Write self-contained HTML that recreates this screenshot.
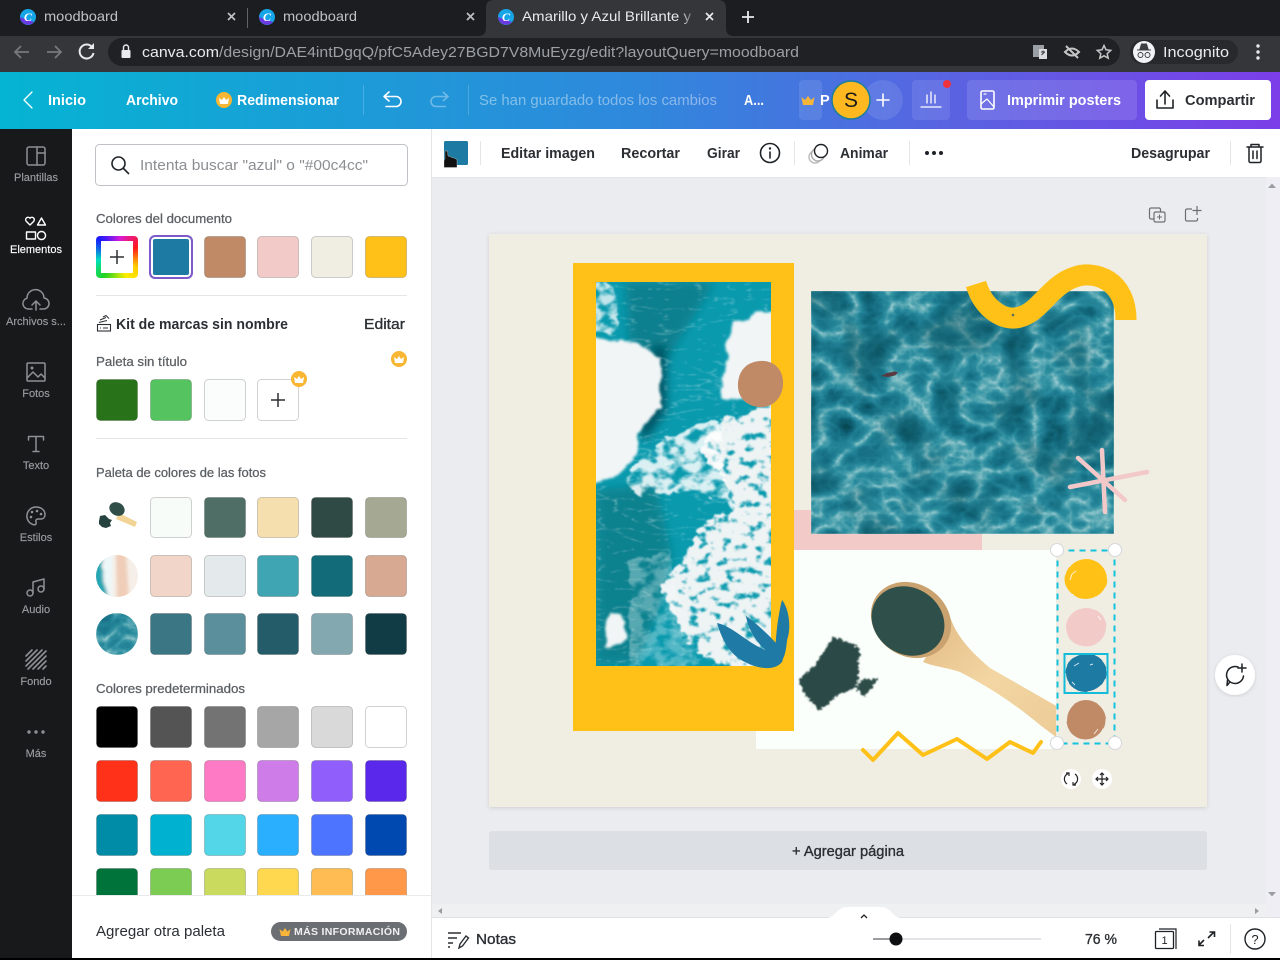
<!DOCTYPE html>
<html lang="es"><head><meta charset="utf-8"><title>Canva</title>
<style>
html,body{margin:0;padding:0;width:1280px;height:960px;overflow:hidden;background:#000}
svg{display:block;position:absolute;left:0;top:0}
text{font-family:"Liberation Sans",sans-serif}
.tab{font-size:14px;fill:#bdc1c6}
.hd{font-size:14.5px;font-weight:bold;fill:#fff}
.tb{font-size:14.5px;font-weight:bold;fill:#2b2f33}
.sb{font-size:11px;fill:#9a9ca0;text-anchor:middle;stroke:#9a9ca0;stroke-width:.15}
.sec{font-size:12.5px;fill:#5b5f63;stroke:#5b5f63;stroke-width:.25}
.s rect,rect.s{stroke:rgba(0,0,0,.18);stroke-width:1}
.ic{fill:none;stroke:#8e9094;stroke-width:1.5;stroke-linecap:round;stroke-linejoin:round}
.dk{fill:none;stroke:#1e2226;stroke-width:1.6;stroke-linecap:round;stroke-linejoin:round}
.wh{fill:none;stroke:#fff;stroke-width:1.6;stroke-linecap:round;stroke-linejoin:round}
#ring{position:absolute;left:96px;top:236px;width:42px;height:42px;border-radius:4px;background:conic-gradient(from 315deg,#1a1aff,#d81ad8 15%,#ff1a1a 30%,#ffcc00 45%,#ffee00 55%,#22d322 72%,#00e0c0 85%,#1a1aff)}
#ring i{position:absolute;left:5px;top:5px;width:32px;height:32px;background:#fff;display:block}
</style></head><body>
<svg width="1280" height="960" viewBox="0 0 1280 960" xmlns="http://www.w3.org/2000/svg">
<defs>
<linearGradient id="hdr" x1="0" x2="1" y1="0" y2="0"><stop offset="0" stop-color="#05b4d2"/><stop offset=".5" stop-color="#2f88dc"/><stop offset=".75" stop-color="#5a62e2"/><stop offset="1" stop-color="#7c3ee8"/></linearGradient>
<linearGradient id="fade" x1="0" x2="1" y1="0" y2="0"><stop offset="0" stop-color="#e8eaed"/><stop offset=".93" stop-color="#e8eaed"/><stop offset="1" stop-color="#77797c"/></linearGradient>
<linearGradient id="wood" x1="0" x2="1" y1="0" y2="1"><stop offset="0" stop-color="#e2bb84"/><stop offset=".5" stop-color="#f3d6a3"/><stop offset="1" stop-color="#eccb96"/></linearGradient>
<filter id="ocean" x="0" y="0" width="1" height="1" color-interpolation-filters="sRGB">
<feTurbulence type="turbulence" baseFrequency=".028 .036" numOctaves="5" seed="11"/>
<feColorMatrix values="1 0 0 0 0 1 0 0 0 0 1 0 0 0 0 0 0 0 0 1"/>
<feComponentTransfer><feFuncR type="table" tableValues=".7 .38 .18 .13 .09 .06 .04 .03"/><feFuncG type="table" tableValues=".84 .68 .56 .5 .44 .38 .32 .26"/><feFuncB type="table" tableValues=".86 .72 .63 .58 .52 .45 .38 .3"/></feComponentTransfer>
<feGaussianBlur stdDeviation=".5"/>
</filter>
<filter id="blot" x="0" y="0" width="1" height="1" color-interpolation-filters="sRGB">
<feTurbulence type="fractalNoise" baseFrequency=".016" numOctaves="3" seed="21"/>
<feColorMatrix values="0 0 0 0 .05 0 0 0 0 .32 0 0 0 0 .37 5 0 0 0 -2.400"/>
</filter>
<filter id="veins" x="0" y="0" width="1" height="1" color-interpolation-filters="sRGB">
<feTurbulence type="turbulence" baseFrequency=".03 .1" numOctaves="4" seed="5"/>
<feColorMatrix values="0 0 0 0 1 0 0 0 0 1 0 0 0 0 1 -6 0 0 0 1.050"/>
<feGaussianBlur stdDeviation=".5"/>
</filter>
<filter id="rough" x="-10%" y="-10%" width="120%" height="120%">
<feTurbulence type="fractalNoise" baseFrequency=".06" numOctaves="3" seed="3"/>
<feDisplacementMap in="SourceGraphic" scale="12" xChannelSelector="R" yChannelSelector="G"/>
<feGaussianBlur stdDeviation="1.300"/>
</filter>
<filter id="foam" x="-10%" y="-10%" width="120%" height="120%" color-interpolation-filters="sRGB">
<feTurbulence type="fractalNoise" baseFrequency=".07 .1" numOctaves="3" seed="9" result="n"/>
<feDisplacementMap in="SourceGraphic" in2="n" scale="14" xChannelSelector="R" yChannelSelector="G" result="d"/>
<feColorMatrix in="n" values="0 0 0 0 0 0 0 0 0 0 0 0 0 0 0 4 0 0 0 -1.300" result="m"/>
<feComposite in="d" in2="m" operator="in"/>
<feGaussianBlur stdDeviation=".8"/>
</filter>
<filter id="foam2" x="-10%" y="-10%" width="120%" height="120%" color-interpolation-filters="sRGB">
<feTurbulence type="fractalNoise" baseFrequency=".09 .12" numOctaves="3" seed="14" result="n"/>
<feDisplacementMap in="SourceGraphic" in2="n" scale="12" xChannelSelector="R" yChannelSelector="G" result="d"/>
<feColorMatrix in="n" values="0 0 0 0 0 0 0 0 0 0 0 0 0 0 0 6 0 0 0 -1.700" result="m"/>
<feComposite in="d" in2="m" operator="in"/>
<feGaussianBlur stdDeviation=".9"/>
</filter>
<filter id="soft" x="-20%" y="-20%" width="140%" height="140%"><feGaussianBlur stdDeviation="5"/></filter>
<filter id="soft2" x="-20%" y="-20%" width="140%" height="140%"><feGaussianBlur stdDeviation="1.500"/></filter>
<filter id="edge" x="-10%" y="-10%" width="120%" height="120%">
<feTurbulence type="fractalNoise" baseFrequency=".04" numOctaves="1" seed="8"/>
<feDisplacementMap in="SourceGraphic" scale="3" xChannelSelector="R" yChannelSelector="G"/>
</filter>
<filter id="powder" x="-20%" y="-20%" width="140%" height="140%">
<feTurbulence type="fractalNoise" baseFrequency=".3" numOctaves="3" seed="4"/>
<feDisplacementMap in="SourceGraphic" scale="7" xChannelSelector="R" yChannelSelector="G"/>
<feGaussianBlur stdDeviation=".7"/>
</filter>
<filter id="shadow" x="-5%" y="-5%" width="110%" height="110%"><feDropShadow dx="0" dy="1" stdDeviation="2" flood-color="#000" flood-opacity=".12"/></filter>
<clipPath id="p1"><rect x="596" y="282" width="175" height="384"/></clipPath>
<clipPath id="p2"><rect x="811" y="291" width="303" height="243"/></clipPath>
<clipPath id="p3"><rect x="756" y="550" width="300" height="199"/></clipPath>
<clipPath id="pn"><rect x="72" y="129" width="359" height="767"/></clipPath>
<clipPath id="c3"><circle cx="117" cy="634" r="21"/></clipPath>
<clipPath id="c2"><circle cx="117" cy="576" r="21"/></clipPath>
</defs>

<!-- browser chrome -->
<rect width="1280" height="36" fill="#1c1d20"/>
<rect y="36" width="1280" height="36" fill="#35363a"/>
<path d="M478 36q8 0 8-8V8q0-8 8-8h224q8 0 8 8v20q0 8 8 8z" fill="#35363a"/>
<line x1="247.500" y1="8" x2="247.500" y2="28" stroke="#5f6368"/>
<g>
<circle cx="28" cy="17" r="8" fill="#16a6e8"/><path d="M20 17a8 8 0 0 0 14 5z" fill="#6a3ae0"/><text x="28" y="21" font-size="12" font-style="italic" font-weight="bold" fill="#fff" text-anchor="middle" style="font-family:'Liberation Serif',serif">C</text>
<circle cx="267" cy="17" r="8" fill="#16a6e8"/><path d="M259 17a8 8 0 0 0 14 5z" fill="#6a3ae0"/><text x="267" y="21" font-size="12" font-style="italic" font-weight="bold" fill="#fff" text-anchor="middle" style="font-family:'Liberation Serif',serif">C</text>
<circle cx="506" cy="17" r="8" fill="#16a6e8"/><path d="M498 17a8 8 0 0 0 14 5z" fill="#6a3ae0"/><text x="506" y="21" font-size="12" font-style="italic" font-weight="bold" fill="#fff" text-anchor="middle" style="font-family:'Liberation Serif',serif">C</text>
</g>
<text class="tab" x="44" y="21" textLength="74" lengthAdjust="spacingAndGlyphs">moodboard</text>
<text class="tab" x="283" y="21" textLength="74" lengthAdjust="spacingAndGlyphs">moodboard</text>
<text class="tab" x="522" y="21" textLength="169" lengthAdjust="spacingAndGlyphs" style="fill:url(#fade)">Amarillo y Azul Brillante y</text>
<path d="M228 13l7 7m0-7l-7 7M467 13l7 7m0-7l-7 7" stroke="#bdc1c6" stroke-width="1.700"/>
<path d="M706 13l7 7m0-7l-7 7" stroke="#e8eaed" stroke-width="1.700"/>
<path d="M748 11v12M742 17h12" stroke="#e8eaed" stroke-width="1.800"/>
<path d="M29 52H15m6-6l-6 6 6 6M47 52h14m-6-6l6 6-6 6" fill="none" stroke="#75787c" stroke-width="1.800"/>
<path d="M92 47a7 7 0 1 0 1.500 6" fill="none" stroke="#e8eaed" stroke-width="2"/><path d="M94 43v6h-6z" fill="#e8eaed"/>
<rect x="108" y="38" width="1012" height="28" rx="14" fill="#202124"/>
<rect x="121.500" y="50" width="9" height="8" rx="1" fill="#e8eaed"/><path d="M123.500 50v-2.500a2.500 2.500 0 0 1 5 0V50" fill="none" stroke="#e8eaed" stroke-width="1.400"/>
<text x="142" y="57" font-size="15" fill="#e8eaed" textLength="77" lengthAdjust="spacingAndGlyphs">canva.com</text>
<text x="219" y="57" font-size="15" fill="#9aa0a6" textLength="580" lengthAdjust="spacingAndGlyphs">/design/DAE4intDgqQ/pfC5Adey27BGD7V8MuEyzg/edit?layoutQuery=moodboard</text>
<rect x="1033" y="45" width="11" height="12" fill="#9aa0a6"/><rect x="1039" y="49" width="8" height="10" fill="#dadce0"/><path d="M1041 52h4m-2-1.500v1.500m-1.500 3l3-3" stroke="#35363a" fill="none"/>
<path d="M1065 52q7-7 14 0q-7 7-14 0z" fill="none" stroke="#c4c7c5" stroke-width="2"/><path d="M1066 46l12 12" stroke="#c4c7c5" stroke-width="2"/>
<path d="M1104 45.500l2 4.300 4.700.6-3.500 3.200 1 4.600-4.200-2.400-4.200 2.400 1-4.600-3.500-3.200 4.700-.6z" fill="none" stroke="#c4c7c5" stroke-width="1.500"/>
<rect x="1130" y="40" width="108" height="24" rx="12" fill="#28292c"/>
<circle cx="1144" cy="52" r="11" fill="#f1f3f4"/><path d="M1137 50h14M1140 49l1.500-5h5l1.500 5z" fill="#3c4043" stroke="#3c4043"/><circle cx="1140.500" cy="55" r="2.500" fill="none" stroke="#3c4043"/><circle cx="1147.500" cy="55" r="2.500" fill="none" stroke="#3c4043"/>
<text x="1163" y="57" font-size="14.500" fill="#e8eaed" textLength="66" lengthAdjust="spacingAndGlyphs">Incognito</text>
<circle cx="1258" cy="46" r="1.700" fill="#e8eaed"/><circle cx="1258" cy="52" r="1.700" fill="#e8eaed"/><circle cx="1258" cy="58" r="1.700" fill="#e8eaed"/>

<!-- canva header -->
<rect y="72" width="1280" height="57" fill="url(#hdr)"/>
<path d="M32 92l-8 8 8 8" class="wh" style="stroke-width:1.300"/>
<text class="hd" x="48" y="105" textLength="38" lengthAdjust="spacingAndGlyphs">Inicio</text>
<text class="hd" x="126" y="105" textLength="52" lengthAdjust="spacingAndGlyphs">Archivo</text>
<circle cx="224" cy="100" r="8" fill="#f8b632"/><path d="M220 104l-1-6 3 2 2-3 2 3 3-2-1 6z" fill="#fff"/>
<text class="hd" x="237" y="105" textLength="102" lengthAdjust="spacingAndGlyphs">Redimensionar</text>
<line x1="363.500" y1="85" x2="363.500" y2="115" stroke="#fff" stroke-opacity=".18"/>
<line x1="468.500" y1="85" x2="468.500" y2="115" stroke="#fff" stroke-opacity=".18"/>
<path d="M389 92l-5 4.500 5 4.500M384 96.500h12a5 5 0 0 1 0 10h-10" class="wh"/>
<path d="M443 92l5 4.500-5 4.500M448 96.500h-12a5 5 0 0 0 0 10h10" fill="none" stroke="#fff" stroke-opacity=".35" stroke-width="1.600"/>
<text x="479" y="105" font-size="14.500" fill="#fff" fill-opacity=".42" textLength="238" lengthAdjust="spacingAndGlyphs">Se han guardado todos los cambios</text>
<text class="hd" x="744" y="105" textLength="20" lengthAdjust="spacingAndGlyphs">A...</text>
<rect x="799" y="80" width="23" height="40" rx="4" fill="#fff" fill-opacity=".1"/>
<path d="M803 105l-1.500-8 3.500 3 3-4 3 4 3.500-3-1.500 8z" fill="#f7b53a"/>
<text class="hd" x="820" y="105">P</text>
<circle cx="883" cy="100" r="20" fill="#fff" fill-opacity=".1"/>
<circle cx="851" cy="100" r="19" fill="#ffb81f" stroke="#1c7f9a" stroke-width="1.500"/>
<text x="851" y="107" font-size="21" fill="#1b1b1b" text-anchor="middle">S</text>
<path d="M883 94v12M877 100h12" class="wh"/>
<rect x="912" y="80" width="38" height="40" rx="4" fill="#fff" fill-opacity=".1"/>
<path d="M921 107h20M927 103v-8M931 103V92M935 103v-8" class="wh" style="stroke-width:1.300"/>
<circle cx="947" cy="84" r="4" fill="#f0323c"/>
<rect x="967" y="80" width="170" height="40" rx="4" fill="#fff" fill-opacity=".12"/>
<rect x="981" y="91" width="13" height="18" rx="1.500" class="wh"/><path d="M981 104l6-5 7 8M984 94h2" class="wh" style="stroke-width:1.200"/>
<text class="hd" x="1007" y="105" textLength="114" lengthAdjust="spacingAndGlyphs">Imprimir posters</text>
<rect x="1145" y="80" width="126" height="40" rx="4" fill="#fff"/>
<path d="M1165 104V92m-4.500 4l4.500-5 4.500 5M1157 100v8h16v-8" class="dk"/>
<text class="tb" x="1185" y="105" textLength="70" lengthAdjust="spacingAndGlyphs">Compartir</text>

<!-- sidebar -->
<rect y="129" width="72" height="831" fill="#18191b"/>
<rect x="27" y="147" width="18" height="18" rx="2" class="ic"/><path d="M37 147v18M37 153h8" class="ic"/>
<text class="sb" x="36" y="181">Plantillas</text>
<path d="M30 225l-3.800-3.800a2.400 2.400 0 0 1 3.800-3 2.400 2.400 0 0 1 3.800 3zM41.500 218l4 7h-8zM26.500 232h9v7h-9zM41.500 231.500a4 4 0 1 0 .01 0z" class="wh" style="stroke-width:1.400"/>
<text x="36" y="253" font-size="11" fill="#fff" text-anchor="middle" stroke="#fff" stroke-width=".15">Elementos</text>
<path d="M32 309h-4a5.500 5.500 0 0 1-1-10.800 8.500 8.500 0 0 1 17-.2 5.500 5.500 0 0 1-1 11h-3M36 310v-9m-4 4l4-4 4 4" class="ic"/>
<text class="sb" x="36" y="325">Archivos s...</text>
<rect x="27" y="363" width="18" height="18" rx="1" class="ic"/><path d="M27 378l6-6 5 5 3-3 4 4" class="ic"/><circle cx="32" cy="368" r="1.500" fill="#8e9094"/>
<text class="sb" x="36" y="397">Fotos</text>
<path d="M28.500 440v-3.500h15v3.500M36 436.500v15M33 451.500h6" class="ic"/>
<text class="sb" x="36" y="469">Texto</text>
<path d="M36 507a9 9 0 0 0-2 17.800c2 .2 2.500-1.300 2-2.800-.6-1.700.3-3 2-3h3c3 0 4-2.500 4-4.500 0-4.500-4-7.500-9-7.500z" class="ic"/><circle cx="32" cy="512" r="1.300" fill="#8e9094"/><circle cx="37" cy="511" r="1.300" fill="#8e9094"/><circle cx="41" cy="514" r="1.300" fill="#8e9094"/><circle cx="31" cy="517" r="1.300" fill="#8e9094"/>
<text class="sb" x="36" y="541">Estilos</text>
<path d="M33 593v-11l11-3v10" class="ic"/><circle cx="30" cy="593" r="3" class="ic"/><circle cx="41" cy="589" r="3" class="ic"/>
<text class="sb" x="36" y="613">Audio</text>
<path d="M26 656l6-6M26 661l11-11M26 666l16-16M28 669l18-18M33 669l13-13M38 669l8-8M43 669l3-3" class="ic" style="stroke-width:1.600"/>
<text class="sb" x="36" y="685">Fondo</text>
<circle cx="29" cy="732" r="1.700" fill="#8e9094"/><circle cx="36" cy="732" r="1.700" fill="#8e9094"/><circle cx="43" cy="732" r="1.700" fill="#8e9094"/>
<text class="sb" x="36" y="757">Más</text>

<!-- panel -->
<rect x="72" y="129" width="360" height="831" fill="#fff"/>
<line x1="431.500" y1="129" x2="431.500" y2="958" stroke="#e3e5e8"/>
<rect x="95.500" y="144.500" width="312" height="41" rx="4" fill="#fff" stroke="#bfc2c6"/>
<circle cx="118.500" cy="163.500" r="6.500" class="dk"/><path d="M123.500 168.500l5 5" class="dk"/>
<text x="140" y="170" font-size="14.500" fill="#8b8e92" textLength="228" lengthAdjust="spacingAndGlyphs">Intenta buscar "azul" o "#00c4cc"</text>
<text class="sec" x="96" y="223" textLength="136" lengthAdjust="spacingAndGlyphs">Colores del documento</text>
<g class="s">
<rect x="150.500" y="236.500" width="41" height="41" rx="4" fill="#1c7aa3" style="stroke:none"/>
<rect x="204.500" y="236.500" width="41" height="41" rx="4" fill="#c08a66"/>
<rect x="257.500" y="236.500" width="41" height="41" rx="4" fill="#f2cbc8"/>
<rect x="311.500" y="236.500" width="41" height="41" rx="4" fill="#f0ede3"/>
<rect x="365.500" y="236.500" width="41" height="41" rx="4" fill="#ffc118"/>
</g>
<rect x="152" y="238" width="38" height="38" rx="3" fill="none" stroke="#fff" stroke-width="2"/>
<rect x="150" y="236" width="42" height="42" rx="5" fill="none" stroke="#7d5cc9" stroke-width="2"/>
<line x1="96" y1="295.500" x2="407" y2="295.500" stroke="#e3e5e8"/>
<rect x="97.500" y="324.500" width="13" height="6.500" fill="none" stroke="#2b2f33" stroke-width="1.100"/><path d="M99 322.500l8-2M100 320l6-2.500M103 317l3-1.500 3 3M100 328h1M103 328h5" fill="none" stroke="#2b2f33" stroke-width="1"/>
<text class="tb" x="116" y="329" textLength="172" lengthAdjust="spacingAndGlyphs">Kit de marcas sin nombre</text>
<text x="364" y="329" font-size="14.500" fill="#2b2f33" stroke="#2b2f33" stroke-width=".3" textLength="41" lengthAdjust="spacingAndGlyphs">Editar</text>
<text class="sec" x="96" y="366" textLength="91" lengthAdjust="spacingAndGlyphs">Paleta sin título</text>
<circle cx="399" cy="359" r="8" fill="#f8b632"/><path d="M395 363l-1-6 3 2 2-3 2 3 3-2-1 6z" fill="#fff"/>
<g class="s">
<rect x="96.500" y="379.500" width="41" height="41" rx="4" fill="#287319"/>
<rect x="150.500" y="379.500" width="41" height="41" rx="4" fill="#55c35f"/>
<rect x="204.500" y="379.500" width="41" height="41" rx="4" fill="#fbfdfd"/>
<rect x="257.500" y="379.500" width="41" height="41" rx="4" fill="#fff"/>
</g>
<path d="M278 393v14M271 400h14" stroke="#2b2f33" stroke-width="1.500"/>
<circle cx="299" cy="379" r="8" fill="#f8b632"/><path d="M295 383l-1-6 3 2 2-3 2 3 3-2-1 6z" fill="#fff"/>
<line x1="96" y1="438.500" x2="407" y2="438.500" stroke="#e3e5e8"/>
<text class="sec" x="96" y="477" textLength="170" lengthAdjust="spacingAndGlyphs">Paleta de colores de las fotos</text>
<g class="s">
<rect x="150.500" y="497.500" width="41" height="40" rx="4" fill="#f8fcf9"/><rect x="204.500" y="497.500" width="41" height="40" rx="4" fill="#4f6e65"/><rect x="257.500" y="497.500" width="41" height="40" rx="4" fill="#f5dfae"/><rect x="311.500" y="497.500" width="41" height="40" rx="4" fill="#2f4a44"/><rect x="365.500" y="497.500" width="41" height="40" rx="4" fill="#a5a893"/>
<rect x="150.500" y="555.500" width="41" height="41" rx="4" fill="#f1d5c8"/><rect x="204.500" y="555.500" width="41" height="41" rx="4" fill="#e4eaec"/><rect x="257.500" y="555.500" width="41" height="41" rx="4" fill="#3fa5b3"/><rect x="311.500" y="555.500" width="41" height="41" rx="4" fill="#116b78"/><rect x="365.500" y="555.500" width="41" height="41" rx="4" fill="#d7a992"/>
<rect x="150.500" y="613.500" width="41" height="41" rx="4" fill="#3a7683"/><rect x="204.500" y="613.500" width="41" height="41" rx="4" fill="#5b8f9c"/><rect x="257.500" y="613.500" width="41" height="41" rx="4" fill="#255c69"/><rect x="311.500" y="613.500" width="41" height="41" rx="4" fill="#84a8b0"/><rect x="365.500" y="613.500" width="41" height="41" rx="4" fill="#113c45"/>
</g>
<!-- thumbs -->
<path d="M119 513l18 9-2 5-19-8z" fill="#f2d596"/><ellipse cx="117" cy="509" rx="8" ry="6.500" transform="rotate(30 117 509)" fill="#314e49"/><path d="M100 516l5-1 4 4 3 1-2 3 1 3-5 2-4-1-3-3 0-3z" fill="#27433f"/>
<g clip-path="url(#c2)"><rect x="96" y="555" width="42" height="42" fill="#f6efe9"/><g filter="url(#soft2)"><path d="M92 555h12l-3 12 4 6-2 8 8 20H92z" fill="#27a5b2"/><path d="M104 555h9l-1 42h-4l-5-20z" fill="#eef7f8"/><path d="M116 552h10l3 48h-12z" fill="#efcdb8"/></g></g>
<g clip-path="url(#c3)"><rect x="96" y="613" width="42" height="42" filter="url(#ocean)"/></g>
<text class="sec" x="96" y="693" textLength="149" lengthAdjust="spacingAndGlyphs">Colores predeterminados</text>
<g class="s" clip-path="url(#pn)">
<rect x="96.500" y="706.500" width="41" height="41" rx="4" fill="#000"/><rect x="150.500" y="706.500" width="41" height="41" rx="4" fill="#545454"/><rect x="204.500" y="706.500" width="41" height="41" rx="4" fill="#737373"/><rect x="257.500" y="706.500" width="41" height="41" rx="4" fill="#a6a6a6"/><rect x="311.500" y="706.500" width="41" height="41" rx="4" fill="#d9d9d9"/><rect x="365.500" y="706.500" width="41" height="41" rx="4" fill="#fff"/>
<rect x="96.500" y="760.500" width="41" height="41" rx="4" fill="#ff3118"/><rect x="150.500" y="760.500" width="41" height="41" rx="4" fill="#ff6550"/><rect x="204.500" y="760.500" width="41" height="41" rx="4" fill="#ff7ac5"/><rect x="257.500" y="760.500" width="41" height="41" rx="4" fill="#cd7ce8"/><rect x="311.500" y="760.500" width="41" height="41" rx="4" fill="#8f5efb"/><rect x="365.500" y="760.500" width="41" height="41" rx="4" fill="#5a28ea"/>
<rect x="96.500" y="814.500" width="41" height="41" rx="4" fill="#008ca6"/><rect x="150.500" y="814.500" width="41" height="41" rx="4" fill="#00b2d0"/><rect x="204.500" y="814.500" width="41" height="41" rx="4" fill="#52d6e8"/><rect x="257.500" y="814.500" width="41" height="41" rx="4" fill="#2aaefe"/><rect x="311.500" y="814.500" width="41" height="41" rx="4" fill="#4d74fe"/><rect x="365.500" y="814.500" width="41" height="41" rx="4" fill="#0049b0"/>
<rect x="96.500" y="868.500" width="41" height="41" rx="4" fill="#00733a"/><rect x="150.500" y="868.500" width="41" height="41" rx="4" fill="#7ccb52"/><rect x="204.500" y="868.500" width="41" height="41" rx="4" fill="#c9da5f"/><rect x="257.500" y="868.500" width="41" height="41" rx="4" fill="#ffd84f"/><rect x="311.500" y="868.500" width="41" height="41" rx="4" fill="#ffbc52"/><rect x="365.500" y="868.500" width="41" height="41" rx="4" fill="#ff9848"/>
</g>
<line x1="72" y1="895.500" x2="431" y2="895.500" stroke="#e9eaec"/>
<text x="96" y="936" font-size="14.500" fill="#2b2f33" textLength="129" lengthAdjust="spacingAndGlyphs">Agregar otra paleta</text>
<rect x="271" y="922" width="136" height="19" rx="9.500" fill="#6b6e73"/>
<path d="M281 936l-1.500-7 3 2.500 2.500-3.500 2.500 3.500 3-2.500-1.500 7z" fill="#f7b53a"/>
<text x="294" y="935" font-size="10.500" font-weight="bold" fill="#f0f0f0" textLength="106" lengthAdjust="spacing">MÁS INFORMACIÓN</text>

<!-- workspace -->
<rect x="432" y="177" width="848" height="741" fill="#ebecf0"/>
<rect x="432" y="129" width="848" height="48" fill="#fff"/>
<line x1="432" y1="177.500" x2="1280" y2="177.500" stroke="#e3e5e8"/>
<rect x="444" y="141" width="24" height="24" rx="1.500" fill="#1c7aa3"/>
<path d="M445 151h2.500l.5 5 2 .5 2 1 2 .5 3 1.500v8h-13v-7l1-1.500z" fill="#111" stroke="#fff" stroke-width=".3"/>
<line x1="480.500" y1="141" x2="480.500" y2="165" stroke="#e3e5e8"/>
<text class="tb" x="501" y="158" textLength="94" lengthAdjust="spacingAndGlyphs">Editar imagen</text>
<text class="tb" x="621" y="158" textLength="59" lengthAdjust="spacingAndGlyphs">Recortar</text>
<text class="tb" x="707" y="158" textLength="33" lengthAdjust="spacingAndGlyphs">Girar</text>
<circle cx="770" cy="153" r="9.500" class="dk"/><path d="M770 152v6" class="dk"/><circle cx="770" cy="148.500" r="1.200" fill="#1e2226"/>
<line x1="794.500" y1="141" x2="794.500" y2="165" stroke="#e3e5e8"/>
<circle cx="815" cy="157" r="6" fill="none" stroke="#bbb" stroke-width="1.400"/><circle cx="818" cy="154.500" r="6.500" fill="#fff" stroke="#aaa" stroke-width="1.400"/><circle cx="821" cy="151" r="6.500" fill="#fff" stroke="#1e2226" stroke-width="1.400"/>
<text class="tb" x="840" y="158" textLength="48" lengthAdjust="spacingAndGlyphs">Animar</text>
<line x1="909.500" y1="141" x2="909.500" y2="165" stroke="#e3e5e8"/>
<circle cx="927" cy="153" r="2" fill="#1e2226"/><circle cx="934" cy="153" r="2" fill="#1e2226"/><circle cx="941" cy="153" r="2" fill="#1e2226"/>
<text class="tb" x="1131" y="158" textLength="79" lengthAdjust="spacingAndGlyphs">Desagrupar</text>
<line x1="1230.500" y1="141" x2="1230.500" y2="165" stroke="#e3e5e8"/>
<path d="M1247 147h16M1251 147v-2.500h8v2.500M1249 147v14a1.500 1.500 0 0 0 1.500 1.500h9a1.500 1.500 0 0 0 1.500-1.500v-14M1253 151v7.500M1257 151v7.500" class="dk" style="stroke-width:1.500"/>
<!-- page tools -->
<path d="M1154 219h-3a1.500 1.500 0 0 1-1.500-1.500v-8a1.500 1.500 0 0 1 1.500-1.500h8a1.500 1.500 0 0 1 1.500 1.500v3" fill="none" stroke="#6b6f73" stroke-width="1.200"/><rect x="1154" y="212" width="11" height="10" rx="1.500" fill="none" stroke="#6b6f73" stroke-width="1.200"/><path d="M1159.500 214.500v5M1157 217h5" stroke="#6b6f73"/>
<path d="M1192 209h-5a1.500 1.500 0 0 0-1.500 1.500v9a1.500 1.500 0 0 0 1.500 1.500h9a1.500 1.500 0 0 0 1.500-1.500V218M1197 206v9M1192.500 210.500h9" fill="none" stroke="#6b6f73" stroke-width="1.200"/>
<!-- scrollbars -->
<rect x="1266" y="177" width="14" height="741" fill="#eeeef4"/>
<path d="M1268 188l4-4.500 4 4.500zM1268 892l4 4.500 4-4.500z" fill="#9a9ca0"/>
<rect x="432" y="904" width="834" height="14" fill="#eff0f2"/>
<path d="M442 908v6l-4-3zM1255 908v6l4-3z" fill="#9a9ca0"/>

<!-- page -->
<rect x="489" y="234" width="718" height="573" fill="#f0ede3" filter="url(#shadow)"/>
<rect x="794" y="510" width="188" height="40" fill="#f2cbc8"/>
<!-- white photo -->
<rect x="756" y="550" width="300" height="199" fill="#fbfffb"/>
<g clip-path="url(#p3)">
<path d="M950 617C958 640 975 655 990 668L1060 708V740L1040 725C1010 700 985 685 960 672C945 667 935 667 923 662Z" fill="url(#wood)"/>
<ellipse cx="911" cy="620" rx="42" ry="36" transform="rotate(35 911 620)" fill="#c9a26f"/>
<ellipse cx="908" cy="621" rx="38" ry="33" transform="rotate(35 908 621)" fill="#2e4f4a"/>
<g filter="url(#powder)"><path d="M833 636L860 648L857 687L838 695L820 711L805 695L798 680L815 665Z" fill="#2c4a46"/><path d="M862 680l16-2-6 10-8 8-8-8z" fill="#2f4d48"/></g>
</g>
<rect x="573" y="263" width="221" height="468" fill="#ffc118"/>
<!-- photo 1 -->
<g clip-path="url(#p1)">
<rect x="596" y="282" width="175" height="384" fill="#0a9aae"/>
<g filter="url(#soft)">
<path d="M625 282h90l-40 65-20 40-25-30z" fill="#07808f"/>
<path d="M652 345l14 0 0 65-20 30-8-8 14-30z" fill="#04505e"/>
<path d="M596 490l60-6 16 70-14 60-22 50h-40z" fill="#07828f"/>
</g>
<rect x="596" y="282" width="175" height="384" filter="url(#veins)" opacity=".35"/>
<g filter="url(#rough)" fill="#f1f5f6">
<path d="M590 337l47 6 21 14 2 50-20 26-3 24-27 23-20 3z"/>
<path d="M776 310l-43 13-13 60 3 14 53 10z"/>
<path d="M608 612l15 0 3 24-20 12z"/>
</g>
<path d="M776 405l-56 15-20 30 25 30 10 30-30 10-10 20-30 40-5 10 17 30 16 30 44 20h39z" fill="#eef3f4" filter="url(#foam2)"/>
<path d="M722 418l-52 19-33 26-12 17 15 15 60-5 35 20-10-40z" fill="#fff" filter="url(#foam)" opacity=".85"/>
<path d="M590 282h22l8 40-10 15-20-5z" fill="#fff" filter="url(#foam)" opacity=".75"/>
<path d="M630 560l40-10 10 60 20 56h-70z" fill="#fff" filter="url(#foam)" opacity=".3"/>
</g>
<!-- photo 2 -->
<g clip-path="url(#p2)">
<rect x="811" y="291" width="303" height="243" filter="url(#ocean)"/>
<rect x="811" y="291" width="303" height="243" filter="url(#blot)" opacity=".45"/>
</g>
<path d="M881 376l6-3 8-1.500 3 1-3 3-7 1.500z" fill="#5a3940"/>
<!-- brown circle -->
<path d="M760 361c15-1 24 10 23 24-1 13-10 23-24 22-13-1-22-10-21-24 1-13 9-21 22-22z" fill="#c08a66"/>
<!-- leaf -->
<g fill="#1f7aa5">
<path d="M717 623C735 627 748 645 771 652L783 660C778 671 760 670 745 662C730 655 722 640 717 623Z"/>
<path d="M746 616C752 620 770 635 782 650L775 656C760 650 748 630 746 616Z"/>
<path d="M782 600C790 610 791 630 787 640C786 655 782 667 775 660C775 640 778 615 782 600Z"/>
</g>
<!-- squiggle -->
<path d="M976 284C984 310 1005 322 1020 317C1040 312 1050 285 1075 277C1095 270 1126 280 1126 320" fill="none" stroke="#ffc118" stroke-width="21" stroke-linejoin="round"/>
<circle cx="1013" cy="315" r="1.300" fill="#5b6a60"/>
<!-- star -->
<path d="M1102 450l3 62M1078 458l47 42M1070 487l77-15" stroke="#f2c8c8" stroke-width="4.500" stroke-linecap="round" fill="none"/>
<!-- zigzag -->
<path d="M863 750l10 10 25-27 25 22 34-16 30 20 23-17 23 11 8-11" fill="none" stroke="#ffc118" stroke-width="4" stroke-linejoin="round" stroke-linecap="round"/>
<!-- selection -->
<g filter="url(#edge)">
<ellipse cx="1086" cy="579" rx="21" ry="20" fill="#ffc118"/>
<ellipse cx="1086" cy="627" rx="20.500" ry="19" fill="#f2cbc8"/>
<ellipse cx="1086" cy="673" rx="20.500" ry="19" fill="#1c7aa3"/>
<ellipse cx="1086" cy="720" rx="19.500" ry="20" fill="#c08a66"/>
</g>
<path d="M1070 580l2-6 4-3M1098 616l3 4M1074 666l5-3M1090 665l3-1M1098 729l-4 5M1072 682l3 3" stroke="#fff" stroke-opacity=".8" fill="none"/>
<rect x="1064.500" y="654" width="43" height="39" fill="none" stroke="#13bcd8" stroke-width="2"/>
<rect x="1057.500" y="550.500" width="57" height="193" fill="none" stroke="#13c4dc" stroke-width="2" stroke-dasharray="6 5"/>
<g fill="#fff" stroke="#d5d7da"><circle cx="1057" cy="550" r="6.500"/><circle cx="1115" cy="550" r="6.500"/><circle cx="1057" cy="743" r="6.500"/><circle cx="1115" cy="743" r="6.500"/></g>
<circle cx="1071" cy="779" r="10" fill="#fff"/><circle cx="1102" cy="779" r="10" fill="#fff"/>
<path d="M1067 784a6 6 0 0 1-1-9l2-1.500M1075 774a6 6 0 0 1 1 9l-2 1.500M1066 773h3v3M1076 785h-3v-3" fill="none" stroke="#222" stroke-width="1.200"/>
<path d="M1102 773v12M1096 779h12M1100 775l2-2 2 2M1100 783l2 2 2-2M1098 777l-2 2 2 2M1106 777l2 2-2 2" fill="none" stroke="#222" stroke-width="1.200"/>
<!-- add page -->
<rect x="489" y="831" width="718" height="39" rx="3" fill="#dcdfe3"/>
<text class="tb" x="792" y="856" textLength="112" lengthAdjust="spacingAndGlyphs" style="font-weight:normal;stroke:#2b2f33;stroke-width:.35">+ Agregar página</text>
<!-- comment -->
<circle cx="1235" cy="675" r="20" fill="#fff" filter="url(#shadow)"/>
<path d="M1238 667a8.500 8.500 0 1 0 5.500 9M1229.500 682.500l-2.500 3 .5-5.500M1242 664v8M1238 668h8" class="dk" style="stroke-width:1.500"/>

<!-- footer -->
<rect x="432" y="918" width="848" height="40" fill="#fff"/>
<line x1="432" y1="917.500" x2="1280" y2="917.500" stroke="#dfe1e4"/>
<path d="M826 918c10 0 10-11 22-11h32c12 0 12 11 22 11z" fill="#fff"/>
<path d="M861 918l3-3 3 3" fill="none" stroke="#1e2226" stroke-width="1.300"/>
<path d="M448 933h13M448 938h9M448 943h5M448 947h2M459 948l1-4 6-8 2.500 2-6 8z" fill="none" stroke="#2b2f33" stroke-width="1.400"/>
<text class="tb" x="476" y="944" textLength="40" lengthAdjust="spacingAndGlyphs" style="font-weight:normal;stroke:#2b2f33;stroke-width:.35">Notas</text>
<rect x="873" y="938" width="168" height="2" fill="#e1e3e6"/><rect x="873" y="938" width="20" height="2" fill="#9a9ca0"/>
<circle cx="896" cy="939" r="6.500" fill="#0e0f11"/>
<text class="tb" x="1085" y="944" textLength="32" lengthAdjust="spacingAndGlyphs" style="font-weight:normal;stroke:#2b2f33;stroke-width:.35">76 %</text>
<path d="M1159 929h17v20" fill="none" stroke="#1e2226" stroke-width="1.200"/>
<rect x="1155.500" y="931.500" width="18" height="17" rx="1" fill="#fff" stroke="#1e2226" stroke-width="1.300"/>
<text x="1164.500" y="944" font-size="11" fill="#1e2226" text-anchor="middle">1</text>
<path d="M1208 938l6-6M1209.500 932h5v5M1204 940l-5 5M1199 940.500v5h5" fill="none" stroke="#1e2226" stroke-width="1.600"/>
<line x1="1230.500" y1="924" x2="1230.500" y2="954" stroke="#e3e5e8"/>
<circle cx="1255" cy="939" r="10" class="dk" style="stroke-width:1.400"/>
<text x="1255" y="944" font-size="13" fill="#1e2226" text-anchor="middle">?</text>
<rect y="958" x="0" width="1280" height="2" fill="#000"/>
</svg>
<div id="ring"><i></i><svg width="32" height="32" viewBox="0 0 32 32" style="left:5px;top:5px"><path d="M16 9v14M9 16h14" stroke="#2b2f33" stroke-width="1.500"/></svg></div>
</body></html>
